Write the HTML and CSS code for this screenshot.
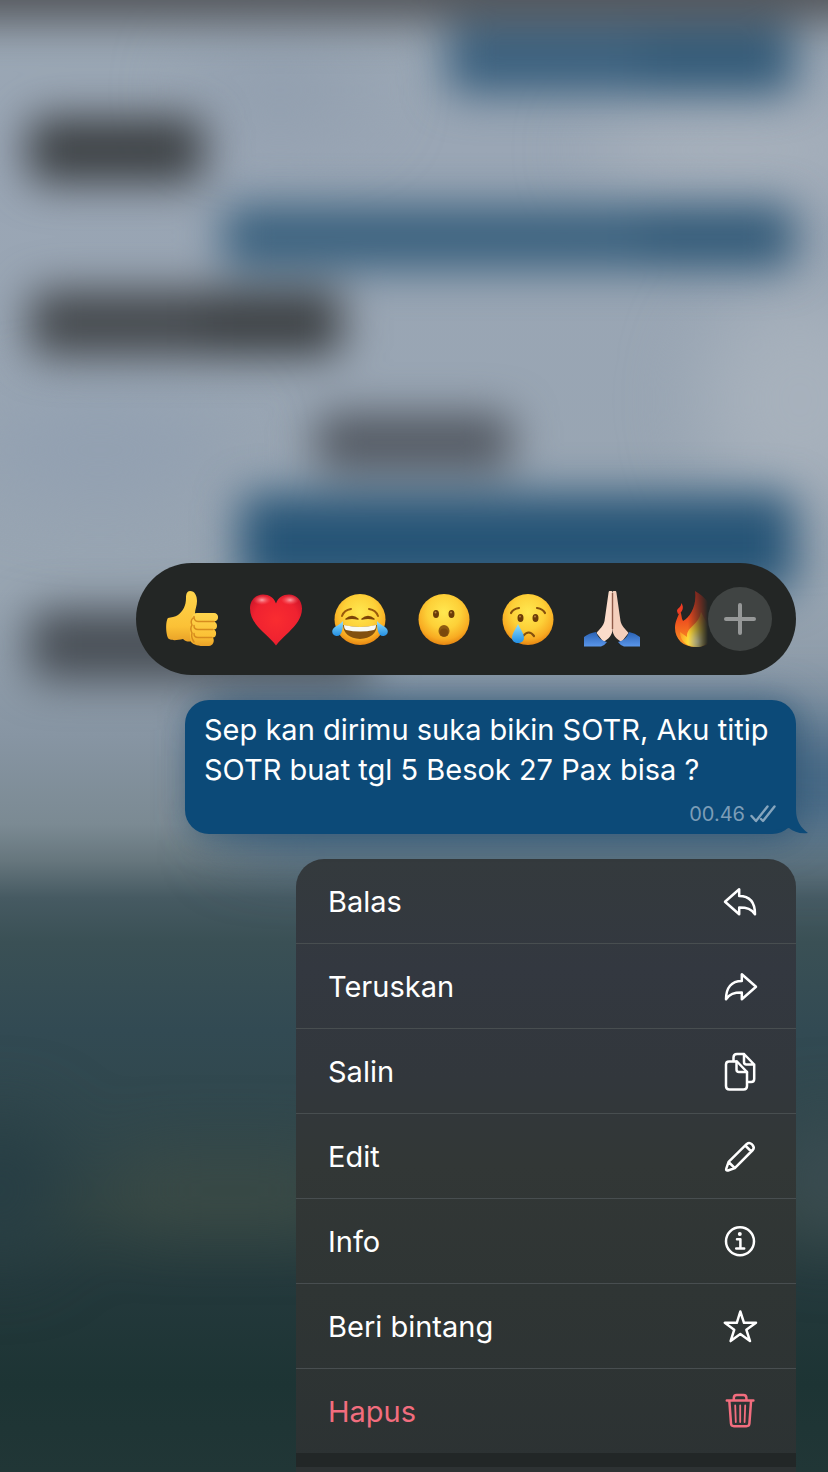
FILE: index.html
```html
<!DOCTYPE html>
<html lang="id">
<head>
<meta charset="utf-8">
<meta name="viewport" content="width=device-width, initial-scale=1">
<title>Menu pesan</title>
<link rel="stylesheet" href="styles.css">
</head>
<body>
<!-- Blurred conversation behind the menu -->
<svg class="backdrop" viewBox="0 0 828 1472" preserveAspectRatio="none" aria-hidden="true">
  <defs>
    <linearGradient id="wall" x1="0" y1="0" x2="0" y2="1">
      <stop offset="0" stop-color="#9ba8b5"/>
      <stop offset=".1" stop-color="#9aa6b5"/>
      <stop offset=".4" stop-color="#98a5b2"/>
      <stop offset=".5" stop-color="#8795a3"/>
      <stop offset=".56" stop-color="#7b8a93"/>
      <stop offset=".585" stop-color="#66767d"/>
      <stop offset=".61" stop-color="#465a62"/>
      <stop offset=".64" stop-color="#3a5055"/>
      <stop offset=".7" stop-color="#324a53"/>
      <stop offset=".78" stop-color="#30464a"/>
      <stop offset=".82" stop-color="#314443"/>
      <stop offset=".87" stop-color="#24393c"/>
      <stop offset=".94" stop-color="#1d3434"/>
      <stop offset="1" stop-color="#213636"/>
    </linearGradient>
    <filter id="soft" color-interpolation-filters="sRGB" filterUnits="userSpaceOnUse" x="-100" y="-100" width="1028" height="1672"><feGaussianBlur stdDeviation="22"/></filter>
    <filter id="haze" color-interpolation-filters="sRGB" filterUnits="userSpaceOnUse" x="-200" y="-200" width="1228" height="1872"><feGaussianBlur stdDeviation="38"/></filter>
  </defs>
  <rect width="828" height="1472" fill="url(#wall)"/>
  <g filter="url(#haze)">
    <ellipse cx="740" cy="150" rx="150" ry="35" fill="#abb4be"/>
    <ellipse cx="800" cy="400" rx="100" ry="110" fill="#a7b1bc"/>
    <ellipse cx="280" cy="90" rx="90" ry="40" fill="#919eae"/>
    <ellipse cx="100" cy="450" rx="130" ry="50" fill="#92a0b1"/>
    <rect x="240" y="730" width="680" height="110" fill="#426684"/>
    <rect x="120" y="1165" width="220" height="50" fill="#3f4d47"/>
    <ellipse cx="0" cy="1190" rx="60" ry="70" fill="#263d44"/>
    <ellipse cx="828" cy="1180" rx="45" ry="60" fill="#3d4e54"/>
  </g>
  <g filter="url(#soft)">
    <rect x="-60" y="-60" width="950" height="82" fill="#54575c"/>
    <rect x="447" y="26" width="348" height="68" rx="14" fill="#3a607e"/>
    <rect x="640" y="34" width="150" height="54" rx="14" fill="#315977"/>
    <rect x="28" y="117" width="176" height="66" rx="14" fill="#3c4043"/>
    <rect x="223" y="205" width="572" height="64" rx="14" fill="#3a617e"/>
    <rect x="640" y="210" width="150" height="54" rx="14" fill="#315977"/>
    <rect x="30" y="290" width="312" height="66" rx="14" fill="#44484c"/>
    <rect x="200" y="295" width="138" height="56" rx="14" fill="#3b3f42"/>
    <rect x="316" y="414" width="196" height="56" rx="14" fill="#50565f"/>
    <rect x="240" y="494" width="555" height="98" rx="14" fill="#265476"/>
    <rect x="30" y="610" width="340" height="70" rx="14" fill="#484e55"/>
    <rect x="205" y="706" width="590" height="124" rx="14" fill="#365d7c"/>
  </g>
</svg>

<main class="screen">
  <section class="reactions" aria-label="Reaksi">
    <div class="emoji-strip">
      <button class="emoji" type="button" aria-label="Jempol">
        <svg viewBox="0 0 56 56">
          <defs><linearGradient id="skin" x1="0" y1="0" x2="0" y2="1"><stop offset="0" stop-color="#ffd54d"/><stop offset=".7" stop-color="#fbc136"/><stop offset="1" stop-color="#e9a127"/></linearGradient></defs>
          <path d="M4 27c3-1 7-1 10-3 5-4 8-9 8-17 0-4 1-7 4-7 5 0 7 5 7 10 0 5-2 8-2 12l-3 28c-3 1-6 1-9-2-5 1-10 2-14 0-3-2-4-17-1-21z" fill="url(#skin)"/>
          <path d="M33 22h17c5 0 6 8 0 8.500 4 1 4 8 0 8 3 1 3 8-1 8 2 4 0 8-4 8.500-8 .500-15-.500-18-4-2-8-1-19 1-25 1-3 2-4 5-4z" fill="url(#skin)"/>
          <path d="M50 30.500H34c-3 0-4-3-4-5M49 38.500H34c-3 0-4-2-4-4M48 46.500H34c-3 0-4-2-4-4M29 27c-2 2-2 5-1 7-2 3-1 6 0 8-1 3 0 6 2 9" fill="none" stroke="#d78c1e" stroke-width="1.500" stroke-linecap="round"/>
        </svg>
      </button>
      <button class="emoji" type="button" aria-label="Hati">
        <svg viewBox="0 0 56 56">
          <defs><radialGradient id="heart" cx=".5" cy=".5" r=".65"><stop offset="0" stop-color="#f92c30"/><stop offset=".65" stop-color="#ef2230"/><stop offset="1" stop-color="#c51328"/></radialGradient><radialGradient id="shine"><stop offset="0" stop-color="#ffb0b5" stop-opacity=".9"/><stop offset="1" stop-color="#ff5a60" stop-opacity="0"/></radialGradient></defs>
          <path d="M28 54.500C25 50 20 46 15 41 8 34 2 27 2 17.500 2 9 8 3.500 15 3.500c6 0 11 3 13 9 2-6 7-9 13-9 7 0 13 5.500 13 14 0 9.500-6 16.500-13 23.500-5 5-10 9-13 13.500z" fill="url(#heart)"/>
          <ellipse cx="14" cy="9" rx="9" ry="5" fill="url(#shine)"/><ellipse cx="42" cy="9" rx="9" ry="5" fill="url(#shine)"/>
        </svg>
      </button>
      <button class="emoji" type="button" aria-label="Tertawa">
        <svg viewBox="0 0 56 56">
          <defs><radialGradient id="face" cx=".5" cy=".36" r=".66"><stop offset="0" stop-color="#ffe850"/><stop offset=".5" stop-color="#fdd038"/><stop offset=".8" stop-color="#f8ab22"/><stop offset="1" stop-color="#e27f10"/></radialGradient><linearGradient id="tear" x1="0" y1="0" x2="0" y2="1"><stop offset="0" stop-color="#8fe0ff"/><stop offset="1" stop-color="#238fe3"/></linearGradient></defs>
          <circle cx="28" cy="28.500" r="25.500" fill="url(#face)"/>
          <path d="M10 25q2-6 9-7M46 25q-2-6-9-7" fill="none" stroke="#9a5a0c" stroke-width="2" stroke-linecap="round"/>
          <path d="M14 28q6-5 12 0-6-1.500-12 0zM30 28q6-5 12 0-6-1.500-12 0z" fill="#7c4508" stroke="#7c4508" stroke-width="1.500" stroke-linejoin="round"/>
          <path d="M11 34q17 4 34 0-1 13-17 14Q12 47 11 34z" fill="#81500f"/>
          <path d="M12 34q16 4 32 0 0 4-2 5-14 3-28 0-2-1-2-5z" fill="#f8f9f3"/>
          <path d="M11 30c0 8-1 15-6 15-4 0-6-4-4-7s7-4 10-8zM45 30c0 8 1 15 6 15 4 0 6-4 4-7s-7-4-10-8z" fill="url(#tear)"/>
        </svg>
      </button>
      <button class="emoji" type="button" aria-label="Terkejut">
        <svg viewBox="0 0 56 56">
          <circle cx="28" cy="28.500" r="25.500" fill="url(#face)"/>
          <ellipse cx="20" cy="23" rx="3" ry="4" fill="#6b3c08"/><ellipse cx="35.500" cy="23" rx="3" ry="4" fill="#6b3c08"/>
          <circle cx="19.500" cy="21.500" r="1" fill="#b98338"/><circle cx="35" cy="21.500" r="1" fill="#b98338"/>
          <ellipse cx="28" cy="40" rx="5.500" ry="6" fill="#8f5a10"/><ellipse cx="28" cy="41.500" rx="4" ry="4" fill="#7b480c"/>
        </svg>
      </button>
      <button class="emoji" type="button" aria-label="Sedih">
        <svg viewBox="0 0 56 56">
          <circle cx="28" cy="28.500" r="25.500" fill="url(#face)"/>
          <ellipse cx="20.500" cy="27" rx="3" ry="4" fill="#6b3c08"/><ellipse cx="35.500" cy="27" rx="3" ry="4" fill="#6b3c08"/>
          <circle cx="20" cy="25.500" r="1" fill="#b98338"/><circle cx="35" cy="25.500" r="1" fill="#b98338"/>
          <path d="M11 22q2-4 8-5M45 22q-2-4-8-5M23 45q6-7 11 0" fill="none" stroke="#85500d" stroke-width="2.200" stroke-linecap="round"/>
          <path d="M18 33c2 5 6 9 6 14 0 3-3 5-6 5s-6-2-6-5c0-5 4-9 6-14z" fill="url(#tear)"/>
        </svg>
      </button>
      <button class="emoji" type="button" aria-label="Tangan berdoa">
        <svg viewBox="0 0 56 56">
          <defs><linearGradient id="sleeve" x1="0" y1="0" x2="0" y2="1"><stop offset="0" stop-color="#2a62b4"/><stop offset="1" stop-color="#5a96ea"/></linearGradient></defs>
          <path d="M28.500 1c-1-2-4-2-4 1l-4 28c-1 5-5 8-8 12l7 9c5-3 9-7 9-13z" fill="#fbdccb"/>
          <path d="M28.500 1c1-2 4-2 4 1l4 28c1 5 5 8 8 12l-7 9c-5-3-9-7-9-13z" fill="#f4cfbc"/>
          <path d="M28.500 2v36" fill="none" stroke="#8e5a48" stroke-width="1.400"/>
          <path d="M0 46q5-4 12-5c2 6 6 9 11 10q-2 3-6 4.500H0zM56 46q-5-4-11-5c-2 6-6 9-11 10q2 3 6 4.500h16z" fill="url(#sleeve)"/>
        </svg>
      </button>
      <button class="emoji" type="button" aria-label="Api">
        <svg viewBox="0 0 56 56">
          <defs><linearGradient id="fire" x1="0" y1="0" x2="0" y2="1"><stop offset="0" stop-color="#c5281b"/><stop offset=".5" stop-color="#ee4c1e"/><stop offset="1" stop-color="#fb9b24"/></linearGradient><radialGradient id="flame" cx=".6" cy=".85" r=".7"><stop offset="0" stop-color="#fff8c0"/><stop offset=".5" stop-color="#ffd936"/><stop offset="1" stop-color="#f98b20"/></radialGradient></defs>
          <path d="M27 0c13 7 23 22 22 37 0 12-9 19-21 19C15 56 7 48 7 37c0-7 3-11 5-17 2 3 1 7 3 10 7-4 14-15 12-30z" fill="url(#fire)"/>
          <path d="M9 20c0-3 5-4 4-8 4 4 1 10-3 11z" fill="#ef3c24"/>
          <path d="M33 21c5 10 9 14 9 21 0 9-6 14-13 14-10 0-17-6-17-15l7 5c-1-10 12-12 14-25z" fill="url(#flame)"/>
        </svg>
      </button>
    </div>
    <button class="add" type="button" aria-label="Reaksi lainnya">
      <svg viewBox="0 0 64 64"><path d="M32 18v28M18 32h28" fill="none" stroke="#969898" stroke-width="4" stroke-linecap="round"/></svg>
    </button>
  </section>

  <article class="bubble">
    <p class="bubble-text">Sep kan dirimu suka bikin SOTR, Aku titip SOTR buat tgl 5 Besok 27 Pax bisa ?</p>
    <footer class="bubble-meta">
      <time datetime="00:46">00.46</time>
      <svg class="ticks" viewBox="0 0 26 20" role="img" aria-label="Terkirim"><path d="M1.500 12l4.500 5L17.500 2.500M11 15l2 2L24.500 2.500" fill="none" stroke="#86a5bd" stroke-width="2.400" stroke-linecap="round" stroke-linejoin="round"/></svg>
    </footer>
    <svg class="tail" viewBox="0 0 32 40" aria-hidden="true"><path d="M0 0h20v16c0 11 5 18 12 23-8 1-14-1-19-5L0 36z" fill="#0c4a78"/></svg>
  </article>

  <nav class="menu" aria-label="Opsi pesan">
    <button class="item" type="button"><span>Balas</span>
      <svg class="icon" viewBox="0 0 40 40"><path d="M5 19.800 19.200 7.300V14C29.500 14 35 20.500 35 32.300 31.500 26.800 27 25.600 19.200 25.600v6.700z"/></svg></button>
    <button class="item" type="button"><span>Teruskan</span>
      <svg class="icon" viewBox="0 0 40 40"><path d="M36 19.800 21.800 7.300V14C11.500 14 6 20.500 6 32.300 9.500 26.800 14 25.600 21.800 25.600v6.700z"/></svg></button>
    <button class="item" type="button"><span>Salin</span>
      <svg class="icon" viewBox="0 0 40 40"><path d="M9 9.500h8L27 20v14q0 3.500-3.500 3.500H9.500Q6 37.500 6 34V12.500q0-3 3-3z"/><path d="M16.500 9.500v8q0 2.500 2.500 2.500h8M13.500 9V5.500q0-3.500 3.500-3.500h7l10.200 10.500V27q0 3-3 3H27.500M24 2v8q0 2.500 2.500 2.500h7.700"/></svg></button>
    <button class="item" type="button"><span>Edit</span>
      <svg class="icon" viewBox="0 0 40 40"><path d="M6.300 31.600 8.600 24.800 26.800 6.900q2.500-2 4.900.300l.9.900q2.200 2.500.2 4.900L14.800 31.100 8 33.500q-2.400.500-1.700-1.900zM25.300 8.500l6 6M9.300 25.700l4.800 4.800"/></svg></button>
    <button class="item" type="button"><span>Info</span>
      <svg class="icon" viewBox="0 0 40 40"><circle cx="20" cy="19.200" r="14"/><path d="M17 17.300h3.400v9M16.200 26.600h8"/><circle cx="19.800" cy="12" r="2" class="dot"/></svg></button>
    <button class="item" type="button"><span>Beri bintang</span>
      <svg class="icon" viewBox="0 0 40 40"><path d="M20.300 4.500 24 15.800h12L26.400 22.800l3.600 11.300-9.700-7-9.700 7 3.600-11.300L4.800 15.800h12z"/></svg></button>
    <button class="item danger" type="button"><span>Hapus</span>
      <svg class="icon" viewBox="0 0 40 40"><path d="M6.800 8.500h26.600M13.800 8.500V6q0-3 3-3h6.600q3 0 3 3v2.500M9.300 8.500 11 31.500q.200 2.700 3 2.700h12.400q2.800 0 3-2.700l1.700-23"/><path class="thin" d="M15.200 13.500l.6 16.500M20.200 13.500v16.500M25.200 13.500l-.6 16.500"/></svg></button>
    <div class="group-gap"></div>
    <div class="next-group"></div>
  </nav>
</main>
</body>
</html>
```

FILE: styles.css
```css
* {
  box-sizing: border-box;
}

body {
  margin: 0;
  position: relative;
  min-height: 100vh;
  overflow-x: hidden;
  background: #24393c;
  color: #fff;
  font-family: Inter, "Liberation Sans", sans-serif;
}

button {
  margin: 0;
  padding: 0;
  border: 0;
  background: none;
  color: inherit;
  font: inherit;
}

svg {
  display: block;
}

.backdrop {
  position: absolute;
  inset: 0;
  width: 100%;
  height: 100%;
}

.screen {
  position: relative;
  min-height: 100vh;
  display: flex;
  flex-direction: column;
  justify-content: flex-end;
  align-items: flex-end;
  gap: 25px;
  padding: 32px 32px 0;
}

.reactions {
  display: flex;
  align-items: center;
  width: 660px;
  max-width: 100%;
  padding: 24px 24px 24px 28px;
  border-radius: 56px;
  background: #232625;
}

.emoji-strip {
  flex: 1;
  min-width: 0;
  display: flex;
  gap: 28px;
  overflow: hidden;
  -webkit-mask-image: linear-gradient(to left, transparent 0, #000 20px);
  mask-image: linear-gradient(to left, transparent 0, #000 20px);
}

.emoji {
  flex: none;
  width: 56px;
  height: 56px;
}

.add {
  flex: none;
  width: 64px;
  height: 64px;
  border-radius: 50%;
  background: #404443;
}

.bubble {
  position: relative;
  width: 611px;
  max-width: 100%;
  padding: 10px 20px 8px 19px;
  border-radius: 24px;
  background: #0c4a78;
  box-shadow: 0 4px 24px rgba(20, 60, 90, 0.2);
}

.bubble-text {
  margin: 0;
  font-size: 29px;
  line-height: 40px;
}

.bubble-meta {
  display: flex;
  justify-content: flex-end;
  align-items: center;
  gap: 5px;
  margin-top: 12px;
  font-size: 20px;
  line-height: 24px;
  color: #7c9db7;
}

.ticks {
  width: 26px;
  height: 20px;
}

.tail {
  position: absolute;
  right: -12px;
  bottom: 0;
  width: 32px;
  height: 40px;
}

.menu {
  width: 500px;
  max-width: 100%;
  border-radius: 28px 28px 0 0;
  overflow: hidden;
  background: linear-gradient(#343a3d 0, #333840 18%, #32373c 36%, #323736 50%, #2f3534 70%, #2c3233 100%);
}

.item {
  display: flex;
  justify-content: space-between;
  align-items: center;
  width: 100%;
  height: 85px;
  padding: 2px 36px 0 32px;
  border-bottom: 1px solid #484e50;
  font-size: 29px;
  line-height: 40px;
  text-align: left;
}

.danger {
  height: 84px;
  border-bottom: 0;
  color: #f26d7e;
}

.icon {
  flex: none;
  width: 40px;
  height: 40px;
  fill: none;
  stroke: currentColor;
  stroke-width: 2.5;
  stroke-linecap: round;
  stroke-linejoin: round;
}

.icon .dot {
  fill: currentColor;
  stroke: none;
}

.icon .thin {
  stroke-width: 1.8;
}

.group-gap {
  height: 14px;
  background: #222727;
}

.next-group {
  height: 5px;
  background: #2d3233;
}
```
